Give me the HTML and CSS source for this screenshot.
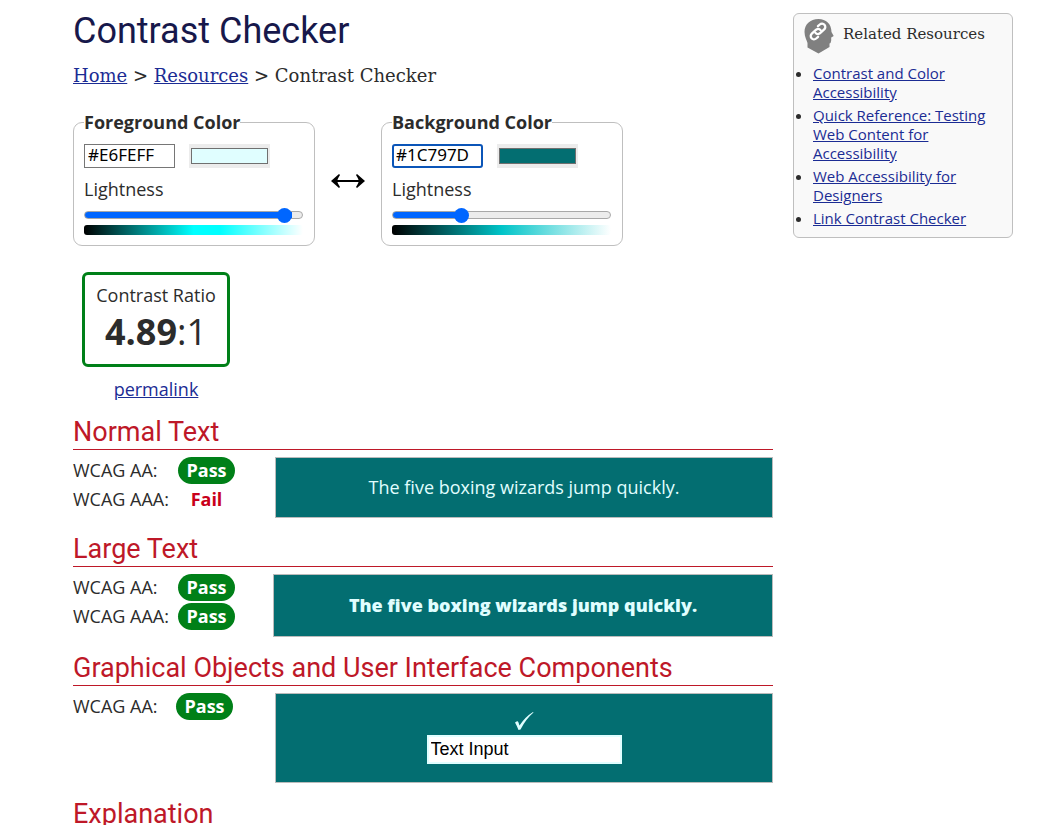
FILE: index.html
```html
<!DOCTYPE html>
<html lang="en">
<head>
<meta charset="utf-8">
<meta name="viewport" content="width=device-width, initial-scale=1">
<title>Contrast Checker</title>
<link rel="stylesheet" href="styles.css">
</head>
<body>
<div class="page">
  <main class="content">
    <h1 class="title">Contrast Checker</h1>
    <nav class="crumbs" aria-label="Breadcrumb"><a href="#">Home</a> &gt; <a href="#">Resources</a> &gt; Contrast Checker</nav>

    <form class="pickers">
      <fieldset class="picker">
        <legend>Foreground Color</legend>
        <div class="inputs">
          <input class="hex" type="text" value="#E6FEFF" aria-label="Foreground hex value">
          <input class="swatch" type="color" value="#e0feff" aria-label="Foreground color picker">
        </div>
        <label class="light-label" for="fg-light">Lightness</label>
        <input class="slider" id="fg-light" type="range" value="95" style="--fill: 95%">
        <div class="ramp ramp-fg"></div>
      </fieldset>
      <button class="swap" type="button" aria-label="Swap colors">
        <svg viewBox="0 0 36 16" width="36" height="16" aria-hidden="true"><path d="M3 8H33" fill="none" stroke="#000" stroke-width="2"/><path d="M1 8L9 1L10 2Q8 5 7 8Q8 11 10 14L9 15ZM35 8L27 1L26 2Q28 5 29 8Q28 11 26 14L27 15Z"/></svg>
      </button>
      <fieldset class="picker">
        <legend>Background Color</legend>
        <div class="inputs">
          <input class="hex hex-active" type="text" value="#1C797D" aria-label="Background hex value">
          <input class="swatch" type="color" value="#036e71" aria-label="Background color picker">
        </div>
        <label class="light-label" for="bg-light">Lightness</label>
        <input class="slider" id="bg-light" type="range" value="30" style="--fill: 30%">
        <div class="ramp ramp-bg"></div>
      </fieldset>
    </form>

    <div class="result">
      <div class="ratio">
        <div class="ratio-label">Contrast Ratio</div>
        <div class="ratio-value"><b>4.89</b>:1</div>
      </div>
      <a class="permalink" href="#">permalink</a>
    </div>

    <h2 class="heading">Normal Text</h2>
    <section class="check">
      <div class="levels">
        <span>WCAG AA:</span><b class="pass">Pass</b>
        <span>WCAG AAA:</span><b class="fail">Fail</b>
      </div>
      <div class="sample">The five boxing wizards jump quickly.</div>
    </section>

    <h2 class="heading">Large Text</h2>
    <section class="check check-large">
      <div class="levels">
        <span>WCAG AA:</span><b class="pass">Pass</b>
        <span>WCAG AAA:</span><b class="pass">Pass</b>
      </div>
      <div class="sample sample-large">The five boxing wizards jump quickly.</div>
    </section>

    <h2 class="heading">Graphical Objects and User Interface Components</h2>
    <section class="check">
      <div class="levels levels-single">
        <span>WCAG AA:</span><b class="pass">Pass</b>
      </div>
      <div class="sample sample-ui">
        <svg class="tick" viewBox="0 0 20 18" width="20" height="18" aria-hidden="true"><path d="M1 10.500L3 9.300Q4 9 4.500 10.500L5.500 13.500Q11 5 19 0L19.500 0.600Q12 7 6.500 17.500L4.500 18Q3 14 1 10.500Z" fill="#e0feff"/></svg>
        <input class="ui-input" type="text" value="Text Input" aria-label="Sample text input">
      </div>
    </section>

    <h2 class="heading">Explanation</h2>
  </main>

  <aside class="related">
    <div class="related-head">
      <svg viewBox="0 0 30 36" width="30" height="36" aria-hidden="true">
        <path d="M14.500 1C6 1 .5 6.500 .5 14C.5 19 3 22.500 3.500 25V29.500L14.500 35.500L25.500 29V25.500Q27 25 27.200 22.500V19.500L29.700 18L27.500 14C27.500 6 22 1 14.500 1Z" fill="#808080"/>
        <g transform="translate(14 13.500) rotate(-42)" fill="none" stroke="#fff" stroke-width="2.300" stroke-linecap="round"><path d="M2.800 1A3.400 3.400 0 0 0 -.2 -2.600H-6A3.300 3.300 0 0 0 -6 4H-3.500"/><path d="M-2.800 -1A3.400 3.400 0 0 0 .2 2.600H6A3.300 3.300 0 0 0 6 -4H3.500"/></g>
      </svg>
      <h2 class="related-title">Related Resources</h2>
    </div>
    <ul class="related-list">
      <li><a href="#">Contrast and Color Accessibility</a></li>
      <li><a href="#">Quick Reference: Testing Web Content for Accessibility</a></li>
      <li><a href="#">Web Accessibility for Designers</a></li>
      <li><a href="#">Link Contrast Checker</a></li>
    </ul>
  </aside>
</div>
</body>
</html>
```
FILE: styles.css
```css
* { box-sizing: border-box; }
body {
  margin: 0;
  background: #fff;
  color: #2c2c2c;
  font: 18px/27px "Open Sans", "Noto Sans", sans-serif;
}
a { color: #1b2c94; }
.page {
  display: flex;
  align-items: flex-start;
  gap: 20px;
  padding: 9px 35px 0 73px;
}
.content { flex: 1; min-width: 0; }
.title {
  margin: 0;
  color: #17184b;
  font: 400 36px/44px Roboto, sans-serif;
}
.crumbs {
  margin-top: 9px;
  font: 18px/28px "DejaVu Serif", serif;
}
.pickers {
  display: flex;
  align-items: center;
  gap: 15px;
  margin-top: 20px;
}
.picker {
  width: 242px;
  min-width: 0;
  margin: 0;
  padding: 10px 11px 10px 10px;
  border: 1px solid #bfbfbf;
  border-radius: 9px;
}
.picker legend {
  padding: 0;
  font-weight: 700;
  line-height: 24px;
}
.inputs { display: flex; gap: 14px; }
.hex {
  width: 91px;
  height: 24px;
  padding: 0 3px 4px;
  border: 1px solid #767676;
  background: #fff;
  color: #000;
  font: 17px/18px "Noto Sans", sans-serif;
}
.hex-active { padding: 0 2px 4px; border: 2px solid #0b55b8; border-radius: 3px; outline: none; }
.swatch {
  appearance: none;
  width: 81px;
  height: 24px;
  padding: 4px 2px;
  border: 0;
  background: #ececec;
}
.swatch::-webkit-color-swatch-wrapper { padding: 0; }
.swatch::-webkit-color-swatch { border: 1px solid #707070; border-radius: 0; }
.light-label { display: block; margin-top: 8px; }
.slider {
  appearance: none;
  display: block;
  width: 100%;
  height: 16px;
  margin: 4px 0 0;
  background: transparent;
}
.slider::-webkit-slider-runnable-track {
  height: 8px;
  border: 1px solid #a8a8a8;
  border-radius: 4px;
  background: linear-gradient(to right, #06f var(--fill), #ececec var(--fill)) border-box;
}
.slider::-webkit-slider-thumb {
  appearance: none;
  width: 15px;
  height: 15px;
  margin-top: -4px;
  border-radius: 50%;
  background: #06f;
}
.ramp { height: 10px; margin-top: 2px; border-radius: 3px; }
.ramp-fg { background: linear-gradient(to right, #000, #0ff 50%, #0ff 62%, #fff); }
.ramp-bg { background: linear-gradient(to right, #000, #00c4c8 50%, #fff); }
.swap {
  display: flex;
  padding: 5px 0 0;
  border: 0;
  background: none;
}
.result {
  display: flex;
  flex-direction: column;
  align-items: center;
  width: fit-content;
  margin: 26px 0 0 9px;
}
.ratio {
  width: 148px;
  padding: 7px 0 8px;
  border: 3px solid #008018;
  border-radius: 6px;
  text-align: center;
}
.ratio-label { line-height: 26px; }
.ratio-value { font-size: 36px; line-height: 48px; }
.permalink { margin-top: 11px; line-height: 23px; }
.heading {
  margin: 15px 0 7px;
  border-bottom: 1px solid #be1828;
  color: #be1828;
  font: 400 27px/33px Roboto, sans-serif;
}
.check {
  display: grid;
  grid-template-columns: 202px 1fr;
  align-items: start;
}
.check-large { grid-template-columns: 200px 1fr; }
.levels {
  display: grid;
  grid-template-columns: 105px 57px;
  row-gap: 2px;
}
.levels-single { grid-template-columns: 103px 57px; }
.pass, .fail { text-align: center; }
.pass { border-radius: 14px; background: #008018; color: #fff; }
.fail { color: #c9001a; }
.sample {
  padding: 16px 10px;
  border: 1px solid #bbb;
  background: #036e71;
  color: #e0feff;
  text-align: center;
}
.sample-large { padding: 17px 10px; font-weight: 800; }
.sample-ui {
  display: flex;
  flex-direction: column;
  align-items: center;
  padding: 18px 10px;
}
.ui-input {
  width: 195px;
  height: 29px;
  margin-top: 5px;
  padding: 0 2px;
  border: 2px solid #e0feff;
  background: #fff;
  color: #000;
  font: 18px/23px "Liberation Sans", sans-serif;
}
.related {
  flex: 0 0 220px;
  margin-top: 4px;
  padding: 4px 10px 9px;
  border: 1px solid #bfbfbf;
  border-radius: 6px;
  background: #f9f9f9;
  font-size: 15px;
  line-height: 19px;
}
.related-head { display: flex; gap: 9px; }
.related-title {
  margin: 5px 0 0;
  font: 400 15px/22px "DejaVu Serif", serif;
}
.related-list { margin: 10px 0 0; padding-left: 9px; }
.related-list li + li { margin-top: 4px; }
```
